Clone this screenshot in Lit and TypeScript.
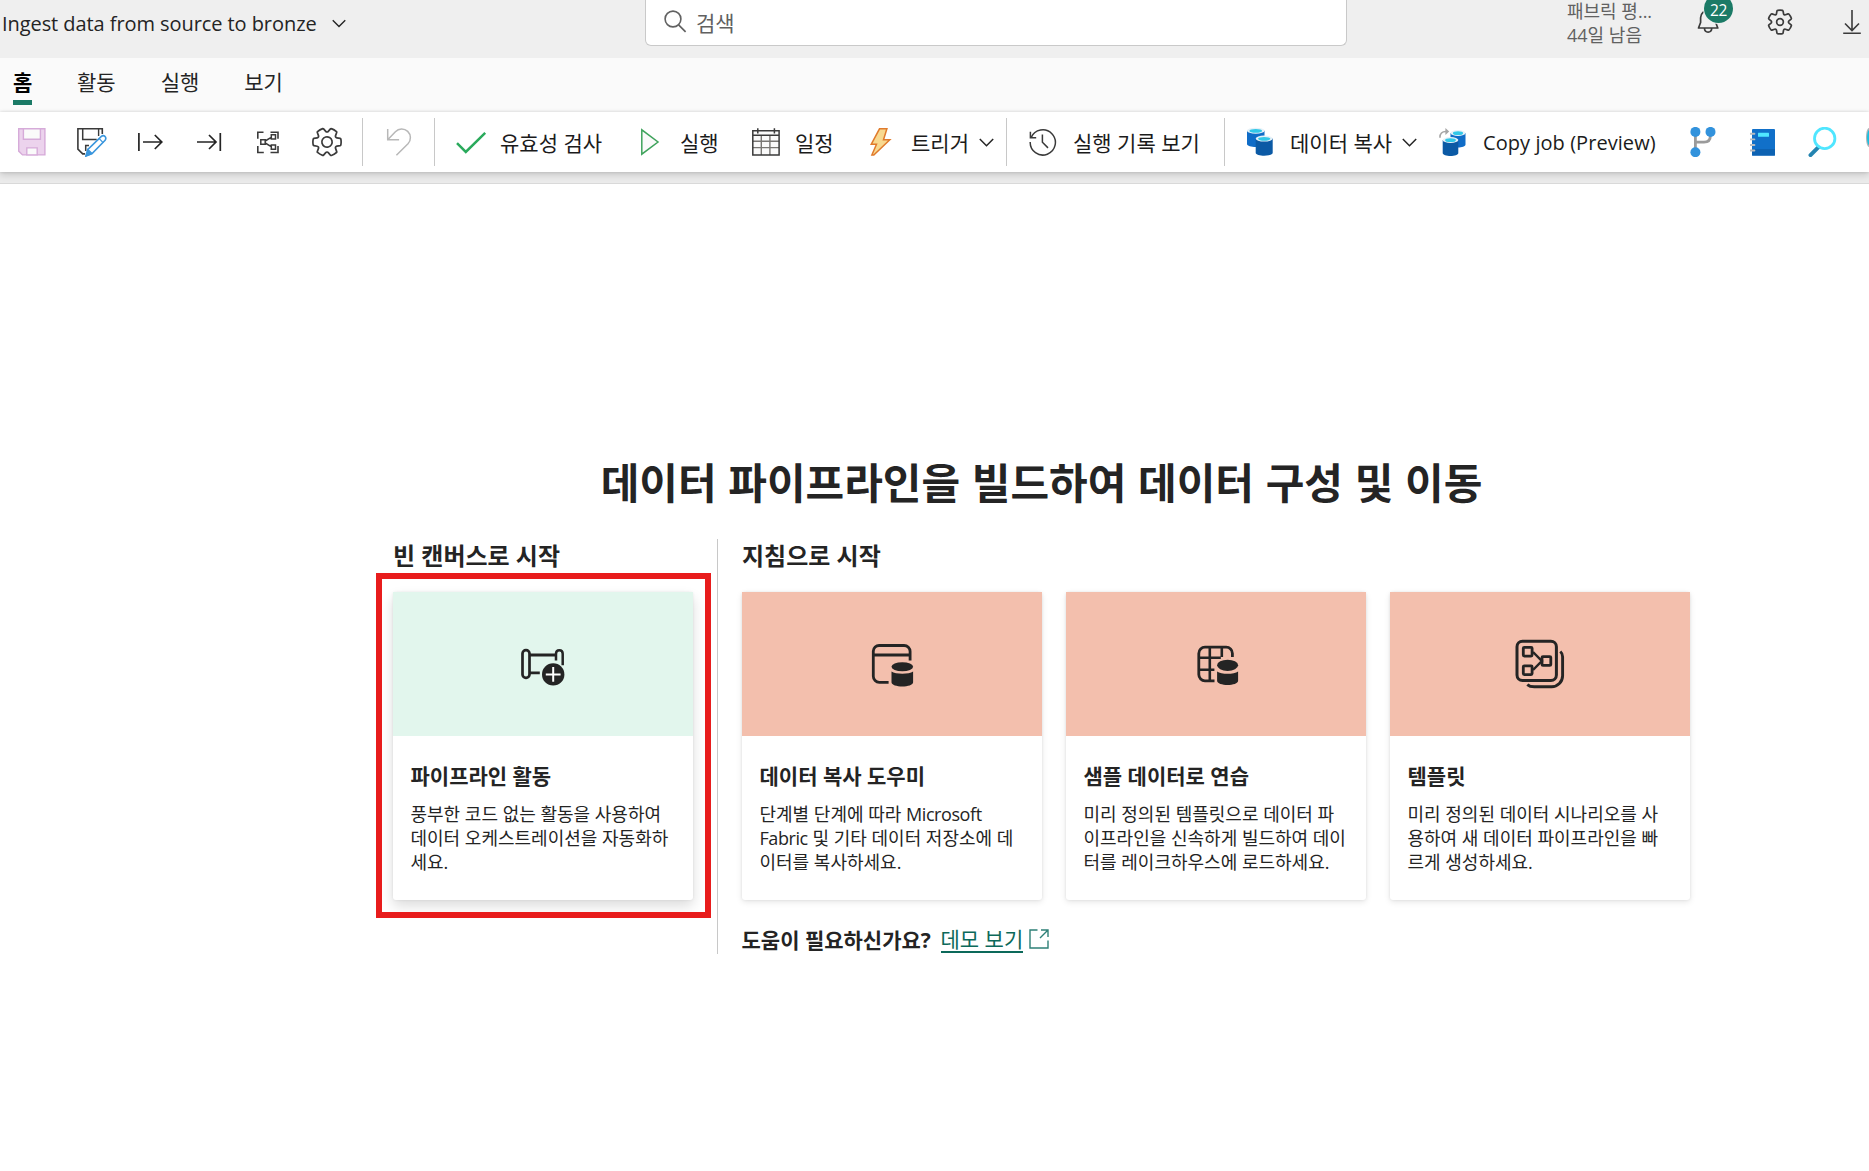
import { LitElement, html, svg, css, type SVGTemplateResult } from "lit";
import { customElement, property } from "lit/decorators.js";

const icon = (x: number, y: number, w: number, h: number, body: SVGTemplateResult) => html`
  <svg width=${w} height=${h} viewBox="${x} ${y} ${w} ${h}" fill="none" aria-hidden="true">${body}</svg>
`;

const GEAR =
  "M1.91 7.38A8.5 8.5 0 0 1 3.7 4.3a.5.5 0 0 1 .54-.13l1.92.68a1 1 0 0 0 1.32-.76l.36-2a.5.5 0 0 1 .4-.4 8.53 8.53 0 0 1 3.55 0c.2.04.35.2.38.4l.37 2a1 1 0 0 0 1.32.76l1.92-.68a.5.5 0 0 1 .54.13 8.5 8.5 0 0 1 1.78 3.08c.06.2 0 .4-.15.54l-1.56 1.32a1 1 0 0 0 0 1.52l1.56 1.32a.5.5 0 0 1 .15.54 8.5 8.5 0 0 1-1.78 3.08.5.5 0 0 1-.54.13l-1.92-.68a1 1 0 0 0-1.32.76l-.37 2a.5.5 0 0 1-.38.4 8.53 8.53 0 0 1-3.56 0 .5.5 0 0 1-.39-.4l-.36-2a1 1 0 0 0-1.32-.76l-1.92.68a.5.5 0 0 1-.54-.13 8.5 8.5 0 0 1-1.78-3.08.5.5 0 0 1 .15-.54l1.56-1.32a1 1 0 0 0 0-1.52L2.06 7.92a.5.5 0 0 1-.15-.54Z";

const gear = (cx: number, cy: number, scale: number, turn: number, hub: number) => svg`
  <g transform="translate(${cx} ${cy}) rotate(${turn}) scale(${scale}) translate(-10 -10)" stroke="#3b3b3b" stroke-width=${1.7 / scale}>
    <path d=${GEAR} /><circle cx="10" cy="10" r=${hub} />
  </g>`;

/* A cylinder with a bright open top: x and y are its upper left corner. */
const drum = (x: number, y: number, w: number, h: number, shade: string) => svg`
  <path d="M${x} ${y + 3}v${h - 6}c0 4 ${w} 4 ${w} 0v${6 - h}z" fill=${shade} />
  <ellipse cx=${x + w / 2} cy=${y + 3} rx=${w / 2} ry="3" fill="#e6f1f8" />
  <ellipse cx=${x + w / 2} cy=${y + 3.2} rx=${w / 2 - 2.4} ry="1.9" fill="#32c8e8" />`;

const chevron = html`<svg width="15" height="9" viewBox="0 0 15 9" fill="none" aria-hidden="true"><path d="M.8 1l6.7 6.7L14.2 1" stroke="#242424" stroke-width="1.5" /></svg>`;

const ICONS = {
  save: icon(18, 127, 30, 30, svg`
    <path d="M18.7 128.7h26.2v26.2H22.5l-3.8-3.8z" fill="#ecd3ed" stroke="#d6abd9" stroke-width="1.4" />
    <path d="M23.4 128.7h17v10.6h-17z" fill="#fafafa" stroke="#d6abd9" stroke-width="1.4" />
    <path d="M26.8 154.9v-7h10.4v7z" fill="#fafafa" stroke="#d6abd9" stroke-width="1.4" />`),
  saveAs: icon(77, 127, 30, 30, svg`
    <path d="M102.3 134v-5.2H77.9v20.3l4.8 4.8h2.4" stroke="#3a3a3a" stroke-width="1.6" />
    <path d="M82.7 129v10.4h14" stroke="#3a3a3a" stroke-width="1.5" /><path d="M98.6 129v7" stroke="#3a3a3a" stroke-width="1.4" />
    <path d="M89 145.6h-3.3v5.5" stroke="#3a3a3a" stroke-width="1.5" />
    <path d="M86 156l1.9-6.6 13.2-12.8c2.8-2.4 6 .8 4 3.6l-13 13.3z" fill="#fff" stroke="#3a96dd" stroke-width="1.6" />
    <path d="M86 156l1.9-6.6 4.2 4.2zM99.3 138.7l4 4.2" fill="#3a96dd" stroke="#3a96dd" stroke-width="1.2" />`),
  arrowFrom: icon(138, 127, 26, 30, svg`
    <path d="M138.9 133v18M143 142h18.4M154.8 135l7 7-7 7" stroke="#242424" stroke-width="1.7" />`),
  arrowTo: icon(197, 127, 26, 30, svg`
    <path d="M197 142h18.6M209 135l7 7-7 7M220.3 133v18" stroke="#242424" stroke-width="1.7" />`),
  lineage: icon(257, 127, 26, 30, svg`
    <path d="M263.5 132.300h-5.700v6.400M270.500 132.300h7.500v6.400M257.800 146v6.500h6M270.500 152.500h7.500V146" stroke="#3a3a3a" stroke-width="1.600" />
    <path d="M260.8 139.800h4.400v4.400h-4.400zM271.300 134.800h4.200v4.200h-4.200zM271.300 145h4.200v4.200h-4.200zM265.200 141l6-3.600M265.200 143l6 3.600" stroke="#3a3a3a" stroke-width="1.500" />`),
  gear: icon(312, 127, 31, 30, gear(327, 142, 1.66, 30, 3.1)),
  undo: icon(386, 127, 26, 30, svg`
    <path d="M387.7 129v10.7h11.4M388.2 139.3l7.2-7.6a8.6 8.6 0 0 1 12.6 12l-11.6 11.5" stroke="#b8b8b8" stroke-width="1.5" />`),
  check: icon(456, 127, 31, 30, svg`<path d="M457 143.2l8.8 8.8 19.4-19.2" stroke="#2aaa5c" stroke-width="2.5" />`),
  play: icon(641, 127, 20, 30, svg`<path d="M641.8 129.8v24.4l16.2-12.2z" fill="#fafafa" stroke="#3fa35c" stroke-width="1.5" />`),
  calendar: icon(752, 127, 29, 30, svg`
    <path d="M752.8 130.7h26.3v24.3h-26.3z" fill="#fafafa" />
    <path d="M753 141.2h26M753 147.6h26M761.3 135.5V155M769.9 135.5V155" stroke="#797774" stroke-width="1.4" />
    <path d="M752.8 130.7h26.3v24.3h-26.3zM753 135.2h26M757.8 128.2v5.3M774.4 128.2v5.3" stroke="#3a3a3a" stroke-width="1.5" />`),
  bolt: icon(870, 127, 22, 30, svg`
    <path d="M879.5 128.8h7.4l-3.4 11h6.3L873.8 155h-1.9l4.6-10.7h-5.3z" fill="#f8d990" stroke="#e07b2c" stroke-width="1.5" />`),
  history: icon(1029, 127, 30, 30, svg`
    <path d="M1031.2 137.5a12.6 12.6 0 1 1-1 4.500M1030.4 131.7v6h5.8" stroke="#3a3a3a" stroke-width="1.5" />
    <path d="M1042.4 134.6v7.7l5.6 5.6" stroke="#3a3a3a" stroke-width="1.5" />`),
  copyData: icon(1247, 127, 28, 30, svg`
    ${drum(1247, 127.7, 17.5, 19.3, "#0f6cc7")}${drum(1255.7, 135.6, 17, 20.2, "#0b5aa5")}`),
  copyJob: icon(1439, 127, 28, 30, svg`
    ${drum(1450.5, 130, 15, 17.6, "#0f6cc7")}${drum(1442.7, 137, 15.6, 19, "#0b5aa5")}
    <path d="M1440 137.8c-.3-4 2-6.6 6.6-6.2" stroke="#a6a6a6" stroke-width="1.6" /><path d="M1445.4 128l3.8 3.4-3.8 3.5z" fill="#a6a6a6" />`),
  branch: icon(1690, 127, 28, 30, svg`
    <path d="M1695.4 132v20M1710.4 133v2.5c0 4.5-2.4 6.7-6.4 6.7h-8.6" stroke="#9b9b9b" stroke-width="2.8" />
    <circle cx="1695.4" cy="131.9" r="5" fill="#3292dc" /><circle cx="1710.5" cy="131.9" r="5" fill="#3292dc" /><circle cx="1695.4" cy="152.2" r="5" fill="#3292dc" />`),
  notebook: icon(1750, 127, 27, 30, svg`
    <rect x="1752" y="129" width="23" height="26.6" rx="1" fill="#1170c9" /><path d="M1752 149h23v6.6h-23z" fill="#0d62b2" />
    <rect x="1758" y="132.8" width="11" height="4" rx=".5" fill="#50e6ff" />
    <path d="M1750.4 133.8h4M1750.4 139.4h4M1750.4 145h4M1750.4 150.5h4" stroke="#b9bcc0" stroke-width="1.9" stroke-linecap="round" />`),
  magnifier: icon(1808, 127, 30, 30, svg`
    <path d="M1818.2 147.400l-7.700 7.700" stroke="#2484b0" stroke-width="4" stroke-linecap="round" /><circle cx="1824.7" cy="138.4" r="10.2" fill="#fff" stroke="#50e6ff" stroke-width="2.8" />`),
  edge: icon(1866, 127, 3, 30, svg`
    <path d="M1869 128c-4 1-4 18 0 19z" fill="#a9b4b8" /><path d="M1869 130c-2.600 1.500-2.600 14 0 15z" fill="#19bfe0" />`),
};

const ART: Record<string, SVGTemplateResult> = {
  pipeline: svg`<svg width="48" height="48" viewBox="519 640 48 48" fill="none">
    <rect x="522.5" y="650.2" width="7" height="27.6" rx="3.4" stroke="#242424" stroke-width="2.7" />
    <path d="M530 655h25M530 672.900h9.800" stroke="#242424" stroke-width="2.8" />
    <path d="M556 660.5v-6.800c0-4.600 6.700-4.600 6.700 0v11.500" stroke="#242424" stroke-width="2.5" />
    <circle cx="553.200" cy="674.400" r="11.200" fill="#242424" />
    <path d="M545.800 674.400h14.800M553.200 667v14.800" stroke="#fff" stroke-width="2" />
  </svg>`,
  copy: svg`<svg width="48" height="48" viewBox="868 640 48 48" fill="none">
    <path d="M888.600 682.300h-9.300a6 6 0 0 1-6-6v-25.200a5.800 5.800 0 0 1 6-5.600h24.800a6 6 0 0 1 6 6v9M873.300 655h36.800" stroke="#242424" stroke-width="2.8" />
    <ellipse cx="902.300" cy="666.800" rx="10.800" ry="4.500" fill="#242424" />
    <path d="M891.500 671.400c4 3 17.600 3 21.600 0v10.800c0 5.600-21.600 5.600-21.600 0z" fill="#242424" />
  </svg>`,
  sample: svg`<svg width="48" height="48" viewBox="1192 640 48 48" fill="none">
    <path d="M1214.500 680.800h-9.500a6.200 6.200 0 0 1-6.200-6.200v-21.200a6.200 6.200 0 0 1 6.200-6.200h21.200a6.200 6.200 0 0 1 6.200 6.200v3.600" stroke="#242424" stroke-width="2.800" />
    <path d="M1209.800 647v34M1221.800 647v10M1198.800 657.700h22M1198.800 669.700h15.600" stroke="#242424" stroke-width="2.600" />
    <ellipse cx="1227.600" cy="665.300" rx="10.500" ry="5.600" fill="#242424" />
    <path d="M1217.100 671.400c4 3.200 17 3.200 21 0v9.400c0 5.600-21 5.600-21 0z" fill="#242424" />
  </svg>`,
  template: svg`<svg width="52" height="52" viewBox="1514 638 52 52" fill="none">
    <rect x="1517" y="641.300" width="39.400" height="39.300" rx="5.500" stroke="#242424" stroke-width="3" />
    <path d="M1560.300 651.500c1.800 1.500 2.300 3 2.300 5.300v19a11 11 0 0 1-11 11h-17.300c-2.600 0-5.300-.700-7-2.200" stroke="#242424" stroke-width="2.900" />
    <path d="M1533 652l8.800 9-8.800 9" stroke="#242424" stroke-width="2.500" />
    <rect x="1523.300" y="647.300" width="8.800" height="8.800" rx="1" stroke="#242424" stroke-width="2.800" />
    <rect x="1523.300" y="665.800" width="8.800" height="8.800" rx="1" stroke="#242424" stroke-width="2.800" />
    <rect x="1542" y="656.600" width="8.800" height="8.800" rx="1" stroke="#242424" stroke-width="2.800" />
  </svg>`,
};

@customElement("start-card")
export class StartCard extends LitElement {
  static styles = css`
    :host { display: block; width: 300px; }
    .card { height: 308px; background: #fff; border-radius: 3px; box-shadow: 0 0 3px rgba(0,0,0,.08), 0 2px 6px rgba(0,0,0,.1); }
    .card.raised { box-shadow: 0 0 3px rgba(0,0,0,.08), 0 6px 13px rgba(0,0,0,.14); }
    .art { height: 144px; display: grid; place-items: center; background: #f3bfad; }
    .raised .art { background: #e2f6ed; }
    .art svg { display: block; }
    .body { padding: 26px 18px 0; margin-left: -.5px; }
    h3 { margin: 0; font-size: 21px; line-height: 28px; font-weight: 700; }
    p { margin: 12px 0 0; font-size: 18px; line-height: 24px; white-space: nowrap; }
    .latin { letter-spacing: -.42px; }
  `;
  @property() art = "pipeline";
  @property() heading = "";
  @property({ attribute: false }) lines: string[] = [];
  @property({ type: Boolean }) raised = false;

  /* Latin words are set slightly tighter than the Hangul around them. */
  private words(line: string) {
    return line.split(/([A-Za-z]+)/).map((part) => (/[A-Za-z]/.test(part) ? html`<span class="latin">${part}</span>` : part));
  }

  render() {
    return html`<article class="card ${this.raised ? "raised" : ""}">
      <div class="art">${ART[this.art]}</div>
      <div class="body">
        <h3>${this.heading}</h3>
        <p>${this.lines.map((line, i) => html`${i ? html`<br />` : ""}${this.words(line)}`)}</p>
      </div>
    </article>`;
  }
}

@customElement("app-root")
export class AppRoot extends LitElement {
  static styles = css`
    :host { display: block; width: 1869px; height: 1171px; overflow: hidden; background: #fff; color: #242424;
      font-family: "Open Sans", "Noto Sans CJK KR", sans-serif; }
    svg { display: block; }
    .header { height: 58px; background: #efefef; display: grid; grid-template-columns: 645px 702px 220px 128px 71px 76px 27px; align-items: start; }
    .title { display: flex; align-items: center; gap: 15px; padding-left: 2px; height: 47px; font-size: 20px; letter-spacing: -.07px; white-space: nowrap; }
    .title svg { width: 14px; }
    .search { box-sizing: border-box; height: 46px; background: #fff; border: 1px solid #c9c9c9; border-top: 0; border-radius: 0 0 6px 6px;
      display: flex; align-items: center; gap: 9px; padding: 0 0 2px 18px; font-size: 21px; color: #616161; }
    .search svg { margin-top: 1px; }
    .trial { grid-column: 4; font-size: 18px; line-height: 24px; color: #616161; margin-top: -1px; white-space: nowrap; }
    .bell { position: relative; padding-top: 8px; }
    .badge { position: absolute; left: 9px; top: -6px; width: 29px; height: 29px; border-radius: 50%; background: #1b7a66; color: #fff;
      font-size: 15.5px; line-height: 32px; text-align: center; box-shadow: 0 0 0 1px #efefef; letter-spacing: -.3px; }
    .action { padding-top: 8px; }
    .tabs { box-sizing: border-box; height: 54px; background: #fafafa; display: flex; gap: 45px; padding: 9px 0 0 12px; font-size: 21px; line-height: 30px; }
    .tab { color: #242424; }
    .tab.active { font-weight: 700; height: 29px; padding-bottom: 4px; border-bottom: 5px solid #1b7a66; width: 19px; margin-left: 1px; color: #000; }
    .toolbar { position: relative; height: 60px; background: #fff; box-shadow: 0 0 3px rgba(0,0,0,.14), 0 3px 7px rgba(0,0,0,.15);
      display: grid; align-items: center; padding-left: 18px; font-size: 21px; white-space: nowrap; color: #1b1b1b;
      grid-template-columns: 59px 61px 59px 60px 55px 50px 24px 48px 22px 45px 140px 40px 71px 44px 74px 42px 67px 27px 23px 45px 150px 23px 44px 111px 37px 44px 207px 60px 58px 58px 3px; }
    .label { margin: -1px 0 0 -1px; }
    .rule { width: 1px; height: 48px; background: #c8c8c8; }
    .latin { font-size: 20px; letter-spacing: .06px; }
    .band { box-sizing: border-box; height: 12px; background: #ebebeb; border-bottom: 1px solid #d9d9d9; }
    .canvas { display: flex; flex-direction: column; padding: 269px 179px 0 393px; }
    h1 { margin: 0; text-align: center; font-size: 42px; line-height: 60px; font-weight: 700; white-space: nowrap; word-spacing: .8px; }
    .columns { display: flex; margin-top: 26px; height: 415px; }
    .blank { width: 324px; border-right: 1px solid #c8c8c8; }
    .guided { padding-left: 24px; }
    h2 { margin: 0; font-size: 24px; line-height: 34px; font-weight: 700; white-space: nowrap; }
    .cards { display: flex; gap: 24px; margin-top: 19px; }
    .picked { position: relative; }
    .outline { position: absolute; box-sizing: border-box; left: -17px; top: -19px; width: 335px; height: 345px; border: 6px solid #e81c1c; pointer-events: none; }
    .help { display: flex; align-items: center; margin-top: 24px; height: 30px; font-size: 21px; white-space: nowrap; }
    .help b { width: 199px; margin-left: -.5px; }
    .link { color: #0c695a; text-decoration: none; line-height: 24px; border-bottom: 2px solid #0c695a; margin: 2px 6px 0 0; }
  `;

  render() {
    const rule = html`<span class="rule"></span>`;
    const label = (text: string) => html`<span class="label">${text}</span>`;
    return html`
      <header class="header">
        <div class="title"><span>Ingest data from source to bronze</span>${chevron}</div>
        <div class="search">
          <svg width="23" height="24" viewBox="0 0 23 24" fill="none"><circle cx="9" cy="9" r="7.900" stroke="#616161" stroke-width="1.600" /><path d="M14.600 14.800l7 7" stroke="#616161" stroke-width="1.700" /></svg>
          <span>검색</span>
        </div>
        <div class="trial">패브릭 평...<br />44일 남음</div>
        <div class="bell">
          <svg width="28" height="28" viewBox="1695 8 28 28" fill="none"><path d="M1698.500 28h19.300l-2.100-5.500v-4.700c0-9.800-15.100-9.800-15.100 0v4.700zM1704.500 28.500c.3 4.800 6.900 4.800 7.200 0" stroke="#3b3b3b" stroke-width="1.700" stroke-linejoin="round" /></svg>
          <span class="badge">22</span>
        </div>
        <div class="action">${icon(1766, 8, 28, 28, gear(1780, 22, 1.4, 0, 2.4))}</div>
        <div class="action">${icon(1842, 8, 20, 28, svg`<path d="M1852 10v20M1845 23.500l7 7 7-7M1843.200 33.200h17.600" stroke="#3b3b3b" stroke-width="1.600" />`)}</div>
      </header>
      <nav class="tabs">
        <span class="tab active">홈</span><span class="tab">활동</span><span class="tab">실행</span><span class="tab">보기</span>
      </nav>
      <div class="toolbar">
        ${ICONS.save}${ICONS.saveAs}${ICONS.arrowFrom}${ICONS.arrowTo}${ICONS.lineage}${ICONS.gear}${rule}
        ${ICONS.undo}${rule}
        ${ICONS.check}${label("유효성 검사")}${ICONS.play}${label("실행")}${ICONS.calendar}${label("일정")}
        ${ICONS.bolt}${label("트리거")}${chevron}${rule}
        ${ICONS.history}${label("실행 기록 보기")}${rule}
        ${ICONS.copyData}${label("데이터 복사")}${chevron}
        ${ICONS.copyJob}<span class="latin">Copy job (Preview)</span>
        ${ICONS.branch}${ICONS.notebook}${ICONS.magnifier}${ICONS.edge}
      </div>
      <div class="band"></div>
      <main class="canvas">
        <h1>데이터 파이프라인을 빌드하여 데이터 구성 및 이동</h1>
        <div class="columns">
          <section class="blank">
            <h2>빈 캔버스로 시작</h2>
            <div class="cards">
              <div class="picked">
                <start-card raised art="pipeline" heading="파이프라인 활동"
                  .lines=${["풍부한 코드 없는 활동을 사용하여", "데이터 오케스트레이션을 자동화하", "세요."]}></start-card>
                <div class="outline"></div>
              </div>
            </div>
          </section>
          <section class="guided">
            <h2>지침으로 시작</h2>
            <div class="cards">
              <start-card art="copy" heading="데이터 복사 도우미"
                .lines=${["단계별 단계에 따라 Microsoft", "Fabric 및 기타 데이터 저장소에 데", "이터를 복사하세요."]}></start-card>
              <start-card art="sample" heading="샘플 데이터로 연습"
                .lines=${["미리 정의된 템플릿으로 데이터 파", "이프라인을 신속하게 빌드하여 데이", "터를 레이크하우스에 로드하세요."]}></start-card>
              <start-card art="template" heading="템플릿"
                .lines=${["미리 정의된 데이터 시나리오를 사", "용하여 새 데이터 파이프라인을 빠", "르게 생성하세요."]}></start-card>
            </div>
            <div class="help">
              <b>도움이 필요하신가요?</b><a class="link">데모 보기</a>
              <svg width="20" height="20" viewBox="0 0 20 20" fill="none"><path d="M8.500 1H1v18h18v-7.500M12 1h7v7M19 1l-8 8" stroke="#2e8077" stroke-width="1.400" /></svg>
            </div>
          </section>
        </div>
      </main>
    `;
  }
}
